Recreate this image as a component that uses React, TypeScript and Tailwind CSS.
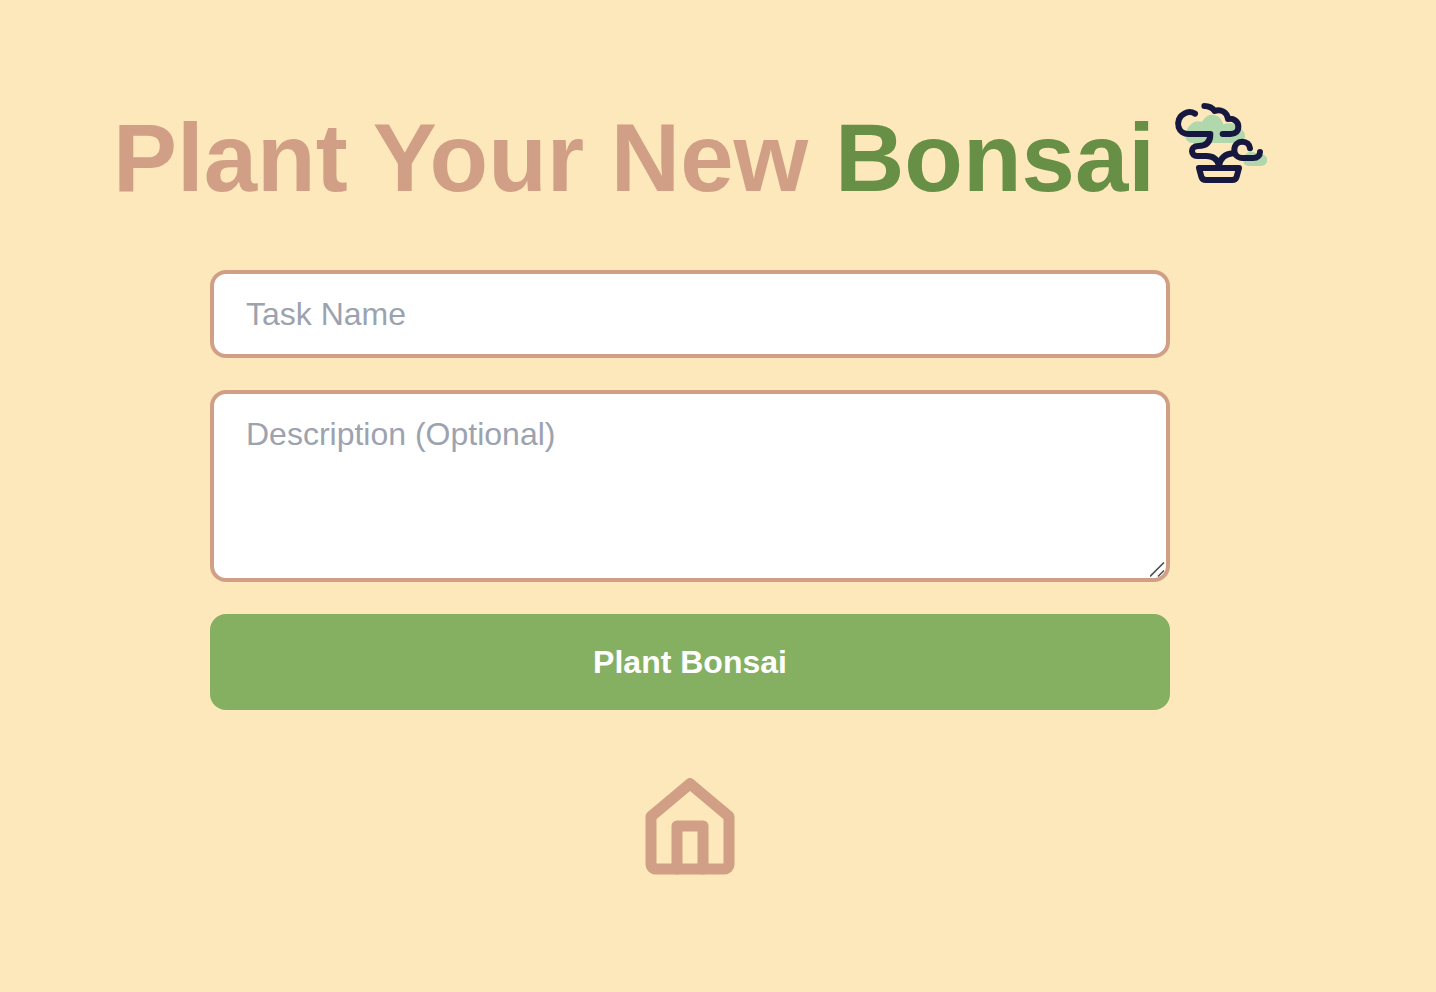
function BonsaiIcon() {
  return (
    <svg viewBox="18 0 288 288" fill="none" aria-hidden="true" className="ml-4 inline-block size-24 align-baseline">
      <path
        d="M82 144a20 20 0 0 1-20-22c2-24 18-43 38-43q6 0 11 2c7-14 18-22 31-22 16 0 29 12 33 29 18-8 40-2 48 13 10 2 17 10 17 22 0 12-8 21-20 21z"
        fill="#b0d8ac"
      />
      <path d="M250 213a15 15 0 0 1-15-15c0-16 10-28 24-28 8 0 14 3 18 8h12a17.500 17.500 0 0 1 0 35z" fill="#b0d8ac" />
      <g stroke="#17183f" strokeWidth="18" strokeLinecap="round" strokeLinejoin="round">
        <path d="M90 56C80 50 68 50 58 56 42 64 36 82 41 97c4 12 16 20 30 20h65c0 24-12 36-36 36-14 0-19 8-19 15 0 9 6 15 15 15h28c20 0 33 10 38 28 4-20 18-34 42-36" />
        <path d="M118 33c14 0 24 5 31 15 18-7 38 3 40 24 17-3 31 7 31 23 0 14-9 22-23 22h-24" />
        <path d="M255 160c-1-12-10-20-23-20-14 0-24 11-24 25s10 24 24 24h32c14 0 21-8 21-18" />
        <path d="M102 219h120l-7 26c-2 7-6 10-14 10h-78c-8 0-12-3-14-10z" />
      </g>
    </svg>
  );
}

function HomeIcon() {
  return (
    <svg
      viewBox="-4 -7 128 128"
      fill="none"
      stroke="currentColor"
      strokeWidth="11"
      strokeLinecap="round"
      strokeLinejoin="round"
      aria-hidden="true"
      className="size-32"
    >
      <path d="M21 51.500 60 18.700 99 51.500V99.500a4.500 4.500 0 0 1-4.500 4.500h-69a4.500 4.500 0 0 1-4.500-4.500z" />
      <path d="M47 104V61h26v43" />
    </svg>
  );
}

const fieldClass =
  "block w-full rounded-2xl border-4 border-[#d19f85] bg-white px-8 py-4 text-[32px] leading-[48px] text-gray-800 placeholder:text-[#9ca3af] outline-none";

export default function App() {
  return (
    <main className="flex min-h-screen flex-col items-center justify-center bg-[#fce8bb] pr-14 pb-3 font-['Liberation_Sans',Arial,sans-serif]">
      <h1 className="mb-16 text-center text-8xl leading-none font-bold text-[#d19f85]">
        Plant Your New <span className="text-[#678f45]">Bonsai</span>
        <BonsaiIcon />
      </h1>
      <form className="flex w-full max-w-[960px] flex-col gap-8" onSubmit={(e) => e.preventDefault()}>
        <input type="text" aria-label="Task Name" placeholder="Task Name" className={fieldClass} />
        <div className="relative">
          <textarea
            aria-label="Description (Optional)"
            placeholder="Description (Optional)"
            className={`${fieldClass} h-48 resize-y [&::-webkit-resizer]:hidden`}
          />
          <svg
            viewBox="0 0 16 16"
            fill="none"
            stroke="#505050"
            strokeWidth="1.600"
            aria-hidden="true"
            className="pointer-events-none absolute right-1 bottom-1 size-4"
          >
            <path d="M0 14.500 14 .5M8 14.500l6-6" />
          </svg>
        </div>
        <button type="submit" className="h-24 rounded-2xl bg-[#86b061] text-[32px] leading-[48px] font-bold text-white">
          Plant Bonsai
        </button>
      </form>
      <a href="#" aria-label="Home" className="mt-12 text-[#d19f85]">
        <HomeIcon />
      </a>
    </main>
  );
}
